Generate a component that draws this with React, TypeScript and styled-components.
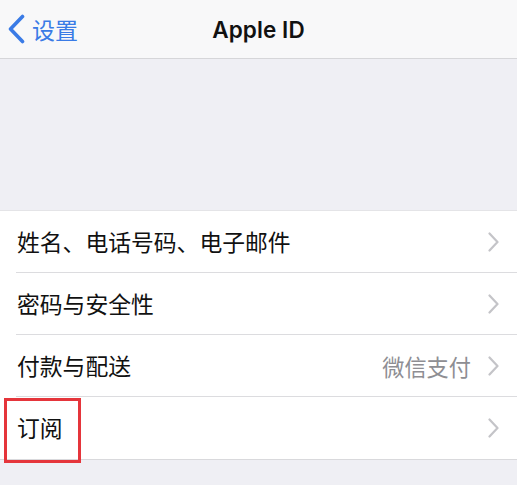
import React from "react";
import styled, { createGlobalStyle } from "styled-components";

const Global = createGlobalStyle`
  html, body { margin: 0; padding: 0; background: #efeff4; }
  * { box-sizing: border-box; }
`;

const Screen = styled.div`
  width: 517px;
  height: 485px;
  background: #efeff4;
  overflow: hidden;
  font-family: "Noto Sans CJK SC", "Noto Sans", sans-serif;
`;

const NavBar = styled.header`
  height: 59px;
  background: #f8f8f9;
  border-bottom: 1px solid #d6d6d9;
  display: grid;
  grid-template-columns: 1fr auto 1fr;
  align-items: center;
`;

const Back = styled.div`
  display: flex;
  align-items: center;
  gap: 6px;
  padding-left: 7px;
  color: #3a7be6;
  font-size: 23px;
  line-height: 1;
`;

const Title = styled.div`
  font-family: Inter, "Liberation Sans", sans-serif;
  font-weight: 600;
  font-size: 22.5px;
  color: #111;
  letter-spacing: 0.1px;
  padding-top: 1px;
`;

const Spacer = styled.div`
  height: 151px;
`;

const List = styled.div`
  background: #fff;
  border-top: 1px solid #e4e4e7;
  border-bottom: 1px solid #d9d9dc;
`;

const Row = styled.div<{ $last?: boolean }>`
  position: relative;
  height: 62px;
  display: flex;
  align-items: center;
  padding: 0 18px 0 17px;
  &::after {
    content: "";
    display: ${(p) => (p.$last ? "none" : "block")};
    position: absolute;
    left: 16px;
    right: 0;
    bottom: 0;
    height: 1px;
    background: #dcdcdf;
  }
`;

const Label = styled.span`
  flex: 1;
  font-size: 22.8px;
  color: #111;
  line-height: 1;
  padding-top: 1px;
`;

const Detail = styled.span`
  font-size: 22.2px;
  color: #8e8e93;
  line-height: 1;
  margin-right: 17px;
  padding-top: 1px;
`;

const Highlight = styled.div`
  position: absolute;
  left: 4px;
  top: 1px;
  width: 77px;
  height: 65px;
  border: 3px solid #e5353b;
  pointer-events: none;
`;

const Chevron = () => (
  <svg width="11" height="20" viewBox="0 0 11 20" fill="none">
    <polyline
      points="1.5,1.5 9.5,10 1.5,18.5"
      stroke="#c4c4c8"
      strokeWidth="2.2"
      strokeLinecap="round"
      strokeLinejoin="round"
    />
  </svg>
);

const BackChevron = () => (
  <svg width="19" height="30" viewBox="0 0 19 30" fill="none">
    <polyline
      points="15.5,2.5 3.5,15 15.5,27.5"
      stroke="#3a7be6"
      strokeWidth="3.6"
      strokeLinecap="round"
      strokeLinejoin="round"
    />
  </svg>
);

const rows = [
  { label: "姓名、电话号码、电子邮件" },
  { label: "密码与安全性" },
  { label: "付款与配送", detail: "微信支付" },
  { label: "订阅", highlight: true },
];

export default function App() {
  return (
    <Screen>
      <Global />
      <NavBar>
        <Back>
          <BackChevron />
          <span>设置</span>
        </Back>
        <Title>Apple ID</Title>
        <div />
      </NavBar>
      <Spacer />
      <List>
        {rows.map((r, i) => (
          <Row key={r.label} $last={i === rows.length - 1}>
            <Label>{r.label}</Label>
            {r.detail && <Detail>{r.detail}</Detail>}
            <Chevron />
            {r.highlight && <Highlight />}
          </Row>
        ))}
      </List>
    </Screen>
  );
}
